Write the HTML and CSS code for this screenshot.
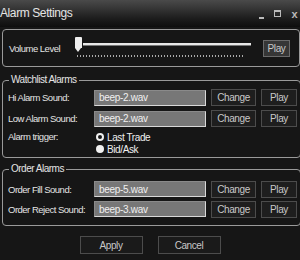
FILE: index.html
```html
<!DOCTYPE html>
<html lang="en">
<head>
    <meta charset="UTF-8">
    <title>Alarm Settings</title>
    <link rel="stylesheet" href="styles.css">
</head>
<body>
    <div class="window">
        <div class="titlebar">
            <span class="title">Alarm Settings</span>
            <div class="controls">
                <span class="ctl min"></span>
                <span class="ctl max"></span>
                <span class="ctl close">x</span>
            </div>
        </div>
        <div class="content">
            <div class="group volume">
                <span class="vol-label">Volume Level</span>
                <div class="slider">
                    <div class="track"></div>
                    <div class="thumb"></div>
                    <div class="ticks"></div>
                </div>
                <button class="btn play">Play</button>
            </div>

            <fieldset class="group watch">
                <legend>Watchlist Alarms</legend>
                <div class="row">
                    <span class="label">Hi Alarm Sound:</span>
                    <input type="text" class="file" value="beep-2.wav">
                    <button class="btn change">Change</button>
                    <button class="btn play">Play</button>
                </div>
                <div class="row">
                    <span class="label">Low Alarm Sound:</span>
                    <input type="text" class="file" value="beep-2.wav">
                    <button class="btn change">Change</button>
                    <button class="btn play">Play</button>
                </div>
                <div class="row trigger">
                    <span class="label">Alarm trigger:</span>
                    <div class="radios">
                        <label class="radio"><span class="dot"></span>Last Trade</label>
                        <label class="radio"><span class="dot filled"></span>Bid/Ask</label>
                    </div>
                </div>
            </fieldset>

            <fieldset class="group order">
                <legend>Order Alarms</legend>
                <div class="row">
                    <span class="label">Order Fill Sound:</span>
                    <input type="text" class="file" value="beep-5.wav">
                    <button class="btn change">Change</button>
                    <button class="btn play">Play</button>
                </div>
                <div class="row">
                    <span class="label">Order Reject Sound:</span>
                    <input type="text" class="file" value="beep-3.wav">
                    <button class="btn change">Change</button>
                    <button class="btn play">Play</button>
                </div>
            </fieldset>

            <div class="actions">
                <button class="btn wide">Apply</button>
                <button class="btn wide">Cancel</button>
            </div>
        </div>
    </div>
</body>
</html>
```

FILE: styles.css
```css
body{
    margin: 0;
    background-color: #161616;
    font-family: 'Liberation Sans', Arial, sans-serif;
    font-size: 9.5px;
    letter-spacing: -0.5px;
    color: #dcdcdc;
}
.window{
    width: 300px;
    height: 260px;
    overflow: hidden;
    background-color: #161616;
}
.titlebar{
    height: 27px;
    display: flex;
    align-items: center;
    justify-content: space-between;
    background: linear-gradient(#4a4a4a, #1c1c1c 70%, #0e0e0e);
}
.title{
    font-size: 12px;
    letter-spacing: -0.4px;
    color: #e4e4e4;
    margin-top: -2px;
}
.controls{
    display: flex;
    align-items: center;
    gap: 10px;
    margin-right: 3px;
}
.ctl{
    display: block;
    color: #bbb;
}
.min{
    width: 5px;
    height: 2px;
    background-color: #bbb;
    margin-top: 8px;
}
.max{
    width: 5px;
    height: 4px;
    border: 1px solid #bbb;
    border-top-width: 2px;
}
.close{
    font-size: 11px;
    font-weight: bold;
    line-height: 10px;
}
.content{
    padding: 2px 0 0 2px;
}
.group{
    border: 1px solid #9a9a9a;
    border-radius: 4px;
    margin: 0;
    white-space: nowrap;
}
.volume{
    height: 36px;
    display: flex;
    align-items: center;
    padding: 0 0 0 6px;
}
.vol-label{
    width: 60px;
    color: #e4e4e4;
}
.slider{
    position: relative;
    width: 178px;
    height: 36px;
    margin-left: 6px;
}
.track{
    position: absolute;
    left: 8px;
    right: 2px;
    top: 13px;
    height: 2px;
    background-color: #e8e8e8;
    border-bottom: 1px solid #777;
}
.thumb{
    position: absolute;
    left: 0;
    top: 7px;
    width: 7px;
    height: 11px;
    background-color: #eee;
    border-radius: 1px 1px 0 0;
}
.thumb::after{
    content: "";
    position: absolute;
    left: 0;
    top: 11px;
    border-left: 3.5px solid transparent;
    border-right: 3.5px solid transparent;
    border-top: 4px solid #eee;
}
.ticks{
    position: absolute;
    left: 2px;
    right: 8px;
    top: 25px;
    height: 2px;
    background-image: repeating-linear-gradient(90deg, #aaa 0 1px, transparent 1px 3px);
}
.volume .play{
    margin-left: auto;
    margin-right: 9px;
    width: 27px;
    height: 17px;
    background-color: #363636;
    border-color: #6a6a6a;
}
fieldset.group{
    padding: 2px 3px 4px 5px;
}
fieldset.watch{
    margin-top: 8px;
}
fieldset.order{
    margin-top: 6px;
    padding-top: 5px;
    padding-bottom: 6px;
}
legend{
    padding: 0 2px;
    margin-left: 1px;
    font-size: 10px;
    line-height: 10px;
    color: #e4e4e4;
}
.row{
    display: flex;
    align-items: center;
    height: 21px;
}
.order .row{
    height: 20px;
}
.label{
    width: 86px;
    color: #e4e4e4;
}
.file{
    width: 106px;
    height: 14px;
    padding: 0 0 0 4px;
    margin: 0 5px 0 0;
    border: 1px solid #d8d8d8;
    border-top-color: #8a8a8a;
    border-left-color: #8a8a8a;
    background-color: #777;
    color: #f0f0f0;
    font-family: inherit;
    font-size: 10px;
    letter-spacing: -0.3px;
    box-sizing: content-box;
}
.btn{
    height: 17px;
    padding: 0;
    background-color: #1e1e1e;
    border: 1px solid #4c4c4c;
    color: #c8c8c8;
    font-family: inherit;
    font-size: 10px;
    letter-spacing: -0.4px;
}
.change{
    width: 45px;
    margin-right: 5px;
}
.row .play{
    width: 36px;
}
.trigger{
    height: 22px;
    padding-top: 2px;
    align-items: flex-start;
}
.radios{
    display: flex;
    flex-direction: column;
    margin-left: 2px;
}
.radio{
    display: flex;
    align-items: center;
    height: 12px;
    color: #f0f0f0;
    font-size: 10px;
    letter-spacing: -0.4px;
}
.dot{
    width: 4px;
    height: 4px;
    border: 2px solid #f0f0f0;
    border-radius: 50%;
    margin-right: 3px;
    background-color: #161616;
}
.dot.filled{
    background-color: #f0f0f0;
}
.actions{
    display: flex;
    justify-content: center;
    gap: 15px;
    margin-top: 10px;
    padding-right: 2px;
}
.wide{
    width: 63px;
    height: 18px;
    background-color: #1a1a1a;
}
```
